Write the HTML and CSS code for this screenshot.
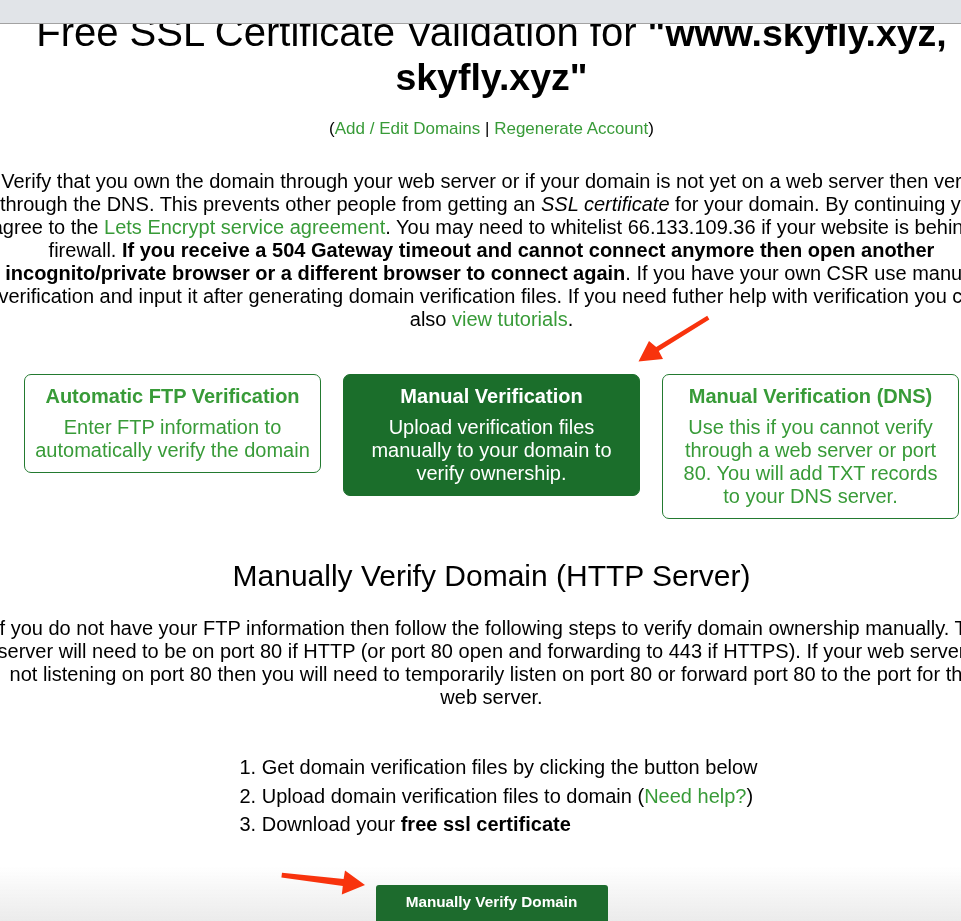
FILE: index.html
```html
<!DOCTYPE html>
<html lang="en">
<head>
<meta charset="utf-8">
<title>Free SSL Certificate Validation</title>
<link rel="stylesheet" href="styles.css">
</head>
<body>
<div class="topbar"></div>
<main class="page">
  <h1 class="title">Free SSL Certificate Validation for <strong>"www.skyfly.xyz, skyfly.xyz"</strong></h1>
  <p class="account-links">(<a href="#">Add / Edit Domains</a> | <a href="#">Regenerate Account</a>)</p>
  <p class="intro">Verify that you own the domain through your web server or if your domain is not yet on a web server then verify through the DNS. This prevents other people from getting an <em>SSL certificate</em> for your domain. By continuing you agree to the <a href="#">Lets Encrypt service agreement</a>. You may need to whitelist 66.133.109.36 if your website is behind a firewall. <strong>If you receive a 504 Gateway timeout and cannot connect anymore then open another incognito/private browser or a different browser to connect again</strong>. If you have your own CSR use manual verification and input it after generating domain verification files. If you need futher help with verification you can also <a href="#">view tutorials</a>.</p>

  <div class="methods">
    <div class="method">
      <div class="method-title">Automatic FTP Verification</div>
      <div class="method-text">Enter FTP information to automatically verify the domain</div>
    </div>
    <div class="method method-active">
      <div class="method-title">Manual Verification</div>
      <div class="method-text">Upload verification files manually to your domain to verify ownership.</div>
    </div>
    <div class="method">
      <div class="method-title">Manual Verification (DNS)</div>
      <div class="method-text">Use this if you cannot verify through a web server or port 80. You will add TXT records to your DNS server.</div>
    </div>
  </div>

  <h2 class="section-title">Manually Verify Domain (HTTP Server)</h2>
  <p class="section-text">If you do not have your FTP information then follow the following steps to verify domain ownership manually. The server will need to be on port 80 if HTTP (or port 80 open and forwarding to 443 if HTTPS). If your web server is not listening on port 80 then you will need to temporarily listen on port 80 or forward port 80 to the port for the web server.</p>

  <div class="steps-wrap">
    <ol class="steps">
      <li>Get domain verification files by clicking the button below</li>
      <li>Upload domain verification files to domain (<a href="#">Need help?</a>)</li>
      <li>Download your <strong>free ssl certificate</strong></li>
    </ol>
  </div>

  <div class="actions">
    <button class="btn" type="button">Manually Verify Domain</button>
  </div>
</main>

<svg class="annotations" width="961" height="921" viewBox="0 0 961 921" aria-hidden="true">
  <polygon fill="#f8330d" points="707.2,315.7 656.2,346.9 649,341 638.5,361.5 663,359 658.8,351.1 709.4,319.5"/>
  <polygon fill="#f8330d" points="282,872.8 343.6,879 345,870.5 365,885 341.8,894.6 342.8,885.9 281.4,877.6"/>
</svg>
<div class="bottom-fade"></div>
</body>
</html>
```

FILE: styles.css
```css
html {
  background: #ffffff;
}
body {
  margin: 0;
  padding-top: 10px;
  font-family: "Liberation Sans", Arial, Helvetica, sans-serif;
  color: #000;
  overflow: hidden;
  height: 921px;
}
a {
  color: #389b38;
  text-decoration: none;
}
.topbar {
  position: fixed;
  top: 0;
  left: 0;
  right: 0;
  height: 23px;
  background: #e1e4e8;
  border-bottom: 1px solid #a2a2a2;
  z-index: 5;
}
.page {
  width: 1001px;
  margin-left: -9px;
  text-align: center;
}
.title {
  margin: 0;
  font-size: 40px;
  line-height: 44px;
  font-weight: normal;
}
.title strong {
  font-weight: bold;
  font-size: 37.5px;
  line-height: 42px;
}
.account-links {
  margin: 21px 0 0;
  font-size: 17px;
  line-height: 20px;
}
.intro {
  margin: 31px 0 0;
  font-size: 20px;
  line-height: 23px;
}
.methods {
  display: flex;
  justify-content: center;
  align-items: flex-start;
  gap: 22px;
  margin-top: 43px;
}
.method {
  width: 297px;
  box-sizing: border-box;
  border: 1px solid #237a30;
  border-radius: 7px;
  padding: 10px;
  color: #389b38;
  background: #fff;
}
.method-active {
  background: #1b6e2b;
  border-color: #1b6e2b;
  color: #ffffff;
}
.method-title {
  font-size: 20px;
  line-height: 23px;
  font-weight: bold;
  margin-bottom: 8px;
}
.method-text {
  font-size: 20px;
  line-height: 23px;
}
.section-title {
  margin: 40px 0 0;
  font-size: 30px;
  line-height: 34px;
  font-weight: normal;
}
.section-text {
  margin: 24px 0 0;
  font-size: 20px;
  line-height: 23px;
}
.steps-wrap {
  margin-top: 44px;
}
.steps {
  display: inline-block;
  margin: 0;
  padding: 0 0 0 14px;
  list-style-position: inside;
  text-align: left;
  font-size: 20px;
  line-height: 28.5px;
}
.actions {
  margin-top: 46px;
}
.btn {
  font-family: "Liberation Sans", Arial, Helvetica, sans-serif;
  font-size: 15.3px;
  font-weight: bold;
  color: #ffffff;
  background: #1d6b2d;
  border: none;
  border-radius: 3px;
  width: 232px;
  height: 40px;
  padding: 0 0 6px;
}
.annotations {
  position: fixed;
  top: 0;
  left: 0;
  z-index: 6;
  pointer-events: none;
}
.bottom-fade {
  position: fixed;
  left: 0;
  right: 0;
  bottom: 0;
  height: 55px;
  background: linear-gradient(rgba(236, 236, 236, 0), #ebebeb);
  z-index: -1;
  pointer-events: none;
}
```
